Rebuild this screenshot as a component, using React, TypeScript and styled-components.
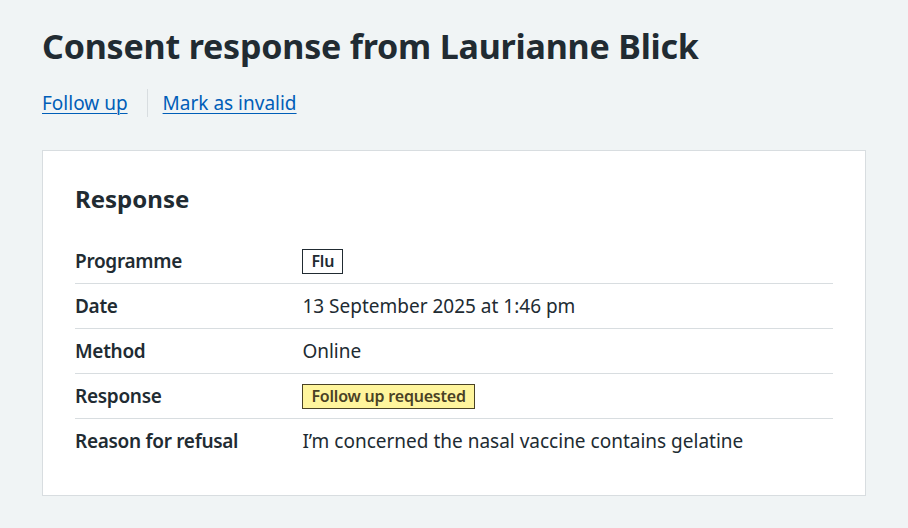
import React from "react";
import styled, { createGlobalStyle } from "styled-components";

const GlobalStyle = createGlobalStyle`
  html, body { margin: 0; padding: 0; }
  body {
    background: #f0f4f5;
    color: #212b32;
    font-family: "Noto Sans", "Liberation Sans", Arial, sans-serif;
    -webkit-font-smoothing: antialiased;
  }
`;

const Main = styled.main`
  padding: 26px 42px 32px;
`;

const Title = styled.h1`
  margin: 0 0 23px;
  font-size: 34px;
  line-height: 40px;
  font-weight: 700;
  letter-spacing: -0.2px;
`;

const ActionList = styled.ul`
  display: flex;
  list-style: none;
  margin: 0 0 33px;
  padding: 0;
`;

const ActionItem = styled.li<{ $divider?: boolean }>`
  font-size: 19px;
  line-height: 28px;
  padding: ${(p) => (p.$divider ? "0 0 0 15px" : "0 19px 0 0")};
  border-left: ${(p) => (p.$divider ? "1px solid #d8dde0" : "none")};
`;

const Link = styled.a`
  color: #005eb8;
  text-decoration: underline;
  text-underline-offset: 3px;
  text-decoration-thickness: 1px;
`;

const Card = styled.section`
  background: #ffffff;
  border: 1px solid #d8dde0;
  padding: 32px;
`;

const CardHeading = styled.h2`
  margin: 0 0 24px;
  font-size: 24px;
  line-height: 32px;
  font-weight: 700;
`;

const SummaryList = styled.dl`
  margin: 0;
`;

const Row = styled.div<{ $last?: boolean }>`
  display: grid;
  grid-template-columns: 30% 1fr;
  border-bottom: ${(p) => (p.$last ? "none" : "1px solid #d8dde0")};
`;

const Key = styled.dt`
  font-size: 19px;
  line-height: 28px;
  font-weight: 600;
  letter-spacing: -0.3px;
  padding: 8px 24px 8px 0;
`;

const Value = styled.dd`
  margin: 0;
  font-size: 19px;
  line-height: 28px;
  height: 28px;
  padding: 8px 0;
`;

const Tag = styled.strong<{ $tone: "white" | "yellow" }>`
  display: inline-block;
  font-size: 16px;
  line-height: 1;
  font-weight: 600;
  letter-spacing: -0.2px;
  padding: 3px 8px 4px;
  border: 1px solid ${(p) => (p.$tone === "yellow" ? "#4a4225" : "#212b32")};
  background: ${(p) => (p.$tone === "yellow" ? "#fff59d" : "#ffffff")};
  color: ${(p) => (p.$tone === "yellow" ? "#4a4225" : "#212b32")};
  vertical-align: 1px;
`;

type RowData = { key: string; value: React.ReactNode };

const rows: RowData[] = [
  { key: "Programme", value: <Tag $tone="white">Flu</Tag> },
  { key: "Date", value: "13 September 2025 at 1:46 pm" },
  { key: "Method", value: "Online" },
  { key: "Response", value: <Tag $tone="yellow">Follow up requested</Tag> },
  {
    key: "Reason for refusal",
    value: "I\u2019m concerned the nasal vaccine contains gelatine",
  },
];

export default function App() {
  return (
    <>
      <GlobalStyle />
      <Main>
        <Title>Consent response from Laurianne Blick</Title>
        <ActionList>
          <ActionItem>
            <Link href="#">Follow up</Link>
          </ActionItem>
          <ActionItem $divider>
            <Link href="#">Mark as invalid</Link>
          </ActionItem>
        </ActionList>
        <Card>
          <CardHeading>Response</CardHeading>
          <SummaryList>
            {rows.map((r, i) => (
              <Row key={r.key} $last={i === rows.length - 1}>
                <Key>{r.key}</Key>
                <Value>{r.value}</Value>
              </Row>
            ))}
          </SummaryList>
        </Card>
      </Main>
    </>
  );
}
